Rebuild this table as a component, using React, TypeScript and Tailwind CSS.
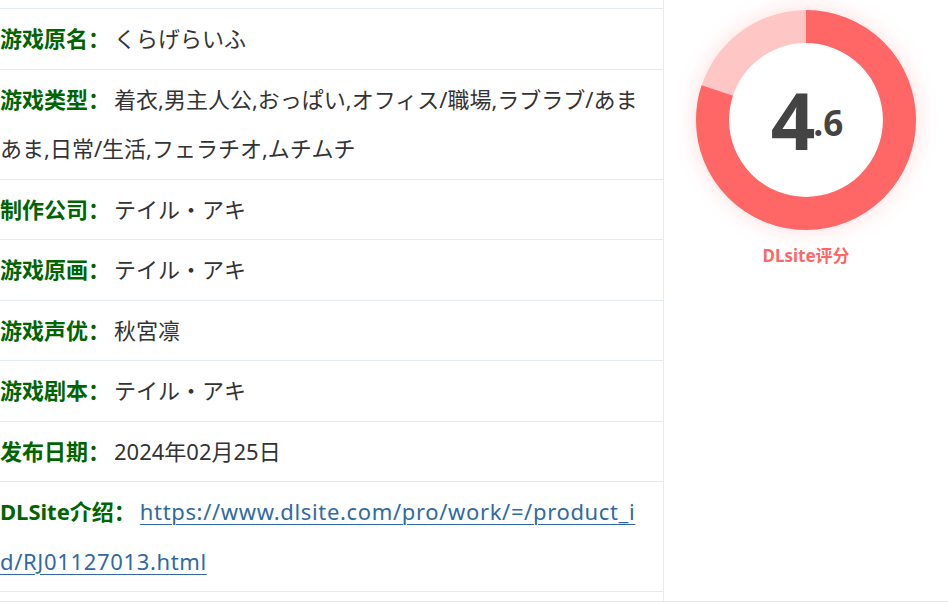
import React from 'react';

type Row = { label: string; value: string; link?: boolean };

const rows: Row[] = [
  { label: '游戏原名：', value: 'くらげらいふ' },
  { label: '游戏类型：', value: '着衣,男主人公,おっぱい,オフィス/職場,ラブラブ/あまあま,日常/生活,フェラチオ,ムチムチ' },
  { label: '制作公司：', value: 'テイル・アキ' },
  { label: '游戏原画：', value: 'テイル・アキ' },
  { label: '游戏声优：', value: '秋宮凛' },
  { label: '游戏剧本：', value: 'テイル・アキ' },
  { label: '发布日期：', value: '2024年02月25日' },
  { label: 'DLSite介绍：', value: 'https://www.dlsite.com/pro/work/=/product_id/RJ01127013.html', link: true },
];

function ScoreDonut({ score }: { score: number }) {
  const r = 93.5;
  const c = 2 * Math.PI * r;
  const part = c * 0.8;
  return (
    <div className="relative w-[220px] h-[220px] rounded-full shadow-[0_0_22px_rgba(255,102,102,0.22)]">
      <svg width="220" height="220" viewBox="0 0 220 220" className="block">
        <circle cx="110" cy="110" r={r} fill="none" stroke="#ffc6c6" strokeWidth="33" />
        <circle
          cx="110"
          cy="110"
          r={r}
          fill="none"
          stroke="#ff6666"
          strokeWidth="33"
          strokeDasharray={`${part} ${c - part}`}
          transform="rotate(-90 110 110)"
        />
      </svg>
      <div className="absolute inset-0 flex items-center justify-center font-['Open_Sans','Noto_Sans',sans-serif] font-bold text-[#444] pl-[2px]">
        <span className="text-[78px] leading-none tracking-[-2px]">{Math.floor(score)}</span>
        <span className="text-[35px] leading-none mt-[4px]">.{Math.round((score % 1) * 10)}</span>
      </div>
    </div>
  );
}

export default function App() {
  return (
    <div className="w-[948px] h-[603px] bg-white overflow-hidden font-['Noto_Sans','Noto_Sans_CJK_SC',sans-serif]">
      <div className="flex border-b border-[#e3ebf3] h-[602px]">
        <div className="w-[664px] border-r border-[#e3ebf3] pt-[8px]">
          {rows.map((row, i) => (
            <div
              key={i}
              className={`border-t border-[#e3ebf3] py-[5px] pr-[18px] text-[22px] leading-[49.5px] text-[#333] break-all ${i === rows.length - 1 ? 'border-b' : ''}`}
            >
              <strong className="text-[#006400] font-bold">{row.label}</strong>
              {row.link ? (
                <a href="#" className="ml-[4px] text-[#2f6aa3] underline underline-offset-[4px] decoration-1 tracking-[0.65px]">{row.value}</a>
              ) : (
                <span className="ml-[4px]">{row.value}</span>
              )}
            </div>
          ))}
        </div>
        <div className="flex-1 flex flex-col items-center pt-[10px]">
          <ScoreDonut score={4.6} />
          <div className="mt-[15px] text-[17px] leading-[22px] font-bold text-[#ff6666]">DLsite评分</div>
        </div>
      </div>
    </div>
  );
}
